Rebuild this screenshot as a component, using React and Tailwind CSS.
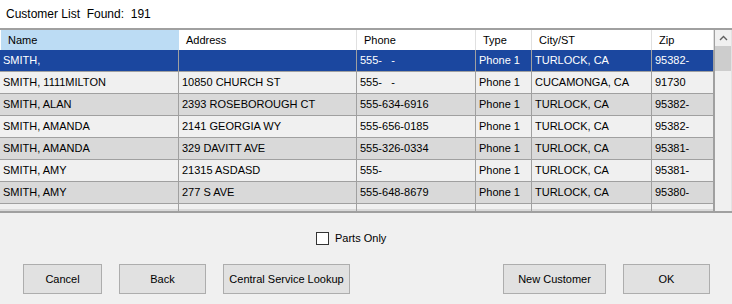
import React from 'react'

const font = { fontFamily: '"Liberation Sans", Arial, sans-serif' }

const columns = [
  { key: 'name', label: 'Name' },
  { key: 'address', label: 'Address' },
  { key: 'phone', label: 'Phone' },
  { key: 'type', label: 'Type' },
  { key: 'city', label: 'City/ST' },
  { key: 'zip', label: 'Zip' }
]

const rows = [
  { name: 'SMITH,', address: '', phone: '555-   -', type: 'Phone 1', city: 'TURLOCK, CA', zip: '95382-' },
  { name: 'SMITH, 1111MILTON', address: '10850 CHURCH ST', phone: '555-   -', type: 'Phone 1', city: 'CUCAMONGA, CA', zip: '91730' },
  { name: 'SMITH, ALAN', address: '2393 ROSEBOROUGH CT', phone: '555-634-6916', type: 'Phone 1', city: 'TURLOCK, CA', zip: '95382-' },
  { name: 'SMITH, AMANDA', address: '2141 GEORGIA WY', phone: '555-656-0185', type: 'Phone 1', city: 'TURLOCK, CA', zip: '95382-' },
  { name: 'SMITH, AMANDA', address: '329 DAVITT AVE', phone: '555-326-0334', type: 'Phone 1', city: 'TURLOCK, CA', zip: '95381-' },
  { name: 'SMITH, AMY', address: '21315 ASDASD', phone: '555-', type: 'Phone 1', city: 'TURLOCK, CA', zip: '95381-' },
  { name: 'SMITH, AMY', address: '277 S AVE', phone: '555-648-8679', type: 'Phone 1', city: 'TURLOCK, CA', zip: '95380-' }
]

const gridCols = 'grid grid-cols-[179px_178px_119px_56px_120px_62px]'

const Button = ({ children, width }) => (
  <button className={`h-[30px] ${width} bg-[#e1e1e1] border border-[#adadad] text-[11px] text-black`}>
    {children}
  </button>
)

export default function App() {
  return (
    <div className="w-[732px] h-[304px] bg-[#f0f0f0] overflow-hidden text-black" style={font}>
      <div className="h-[28px] bg-white flex items-center pl-[6px] text-[12px] whitespace-pre">
        Customer List  Found:  191
      </div>

      <div className="flex border-t-2 border-b-2 border-[#a0a0a0] h-[185px]">
        <div className="w-[714px] flex flex-col overflow-hidden">
          <div className={`${gridCols} h-[20px] bg-white text-[11px]`}>
            {columns.map((c, i) => (
              <div
                key={c.key}
                className={`flex items-center pl-[7px] border-r ${i === 0 ? 'bg-[#bcdcf4] border-[#bcdcf4] ml-[1px]' : 'border-[#e0e0e0]'}`}
              >
                {c.label}
              </div>
            ))}
          </div>

          {rows.map((r, idx) => {
            const selected = idx === 0
            const bg = selected ? 'bg-[#1b479f] text-white' : idx % 2 === 1 ? 'bg-[#f0f0f0]' : 'bg-[#d9d9d9]'
            return (
              <div key={idx} className={`${gridCols} h-[22px] border-b border-[#a0a0a0] text-[11px] ${bg}`}>
                {columns.map(c => (
                  <div key={c.key} className="flex items-center pl-[3px] border-r border-[#a0a0a0] whitespace-pre overflow-hidden">
                    {r[c.key]}
                  </div>
                ))}
              </div>
            )
          })}

          {/* partially visible rows at the bottom */}
          <div className={`${gridCols} h-[5px] bg-[#f0f0f0]`}>
            {columns.map(c => (
              <div key={c.key} className="border-r border-[#a0a0a0]" />
            ))}
          </div>
          <div className={`${gridCols} flex-1 bg-[#d9d9d9]`}>
            {columns.map(c => (
              <div key={c.key} className="border-r border-[#a0a0a0]" />
            ))}
          </div>
        </div>

        <div className="w-[17px] border-l border-[#a0a0a0] bg-[#f0f0f0] flex flex-col">
          <div className="h-[16px] flex items-center justify-center">
            <svg width="9" height="6" viewBox="0 0 9 6">
              <polyline points="1,5 4.5,1.5 8,5" fill="none" stroke="#606060" strokeWidth="1.4" />
            </svg>
          </div>
          <div className="h-[25px] bg-[#cdcdcd]" />
        </div>
        <div className="w-[1px] bg-[#e3e3e3]" />
      </div>

      <div className="h-[25px] mt-[13px] flex items-center pl-[316px] gap-[6px] text-[11px]">
        <div className="w-[13px] h-[13px] border border-[#333333] bg-white" />
        <span>Parts Only</span>
      </div>

      <div className="mt-[13px] flex justify-between px-[22px]">
        <div className="flex gap-[17px] pl-[1px]">
          <Button width="w-[79px]">Cancel</Button>
          <Button width="w-[87px]">Back</Button>
          <Button width="w-[127px]">Central Service Lookup</Button>
        </div>
        <div className="flex gap-[17px]">
          <Button width="w-[103px]">New Customer</Button>
          <Button width="w-[87px]">OK</Button>
        </div>
      </div>
    </div>
  )
}
